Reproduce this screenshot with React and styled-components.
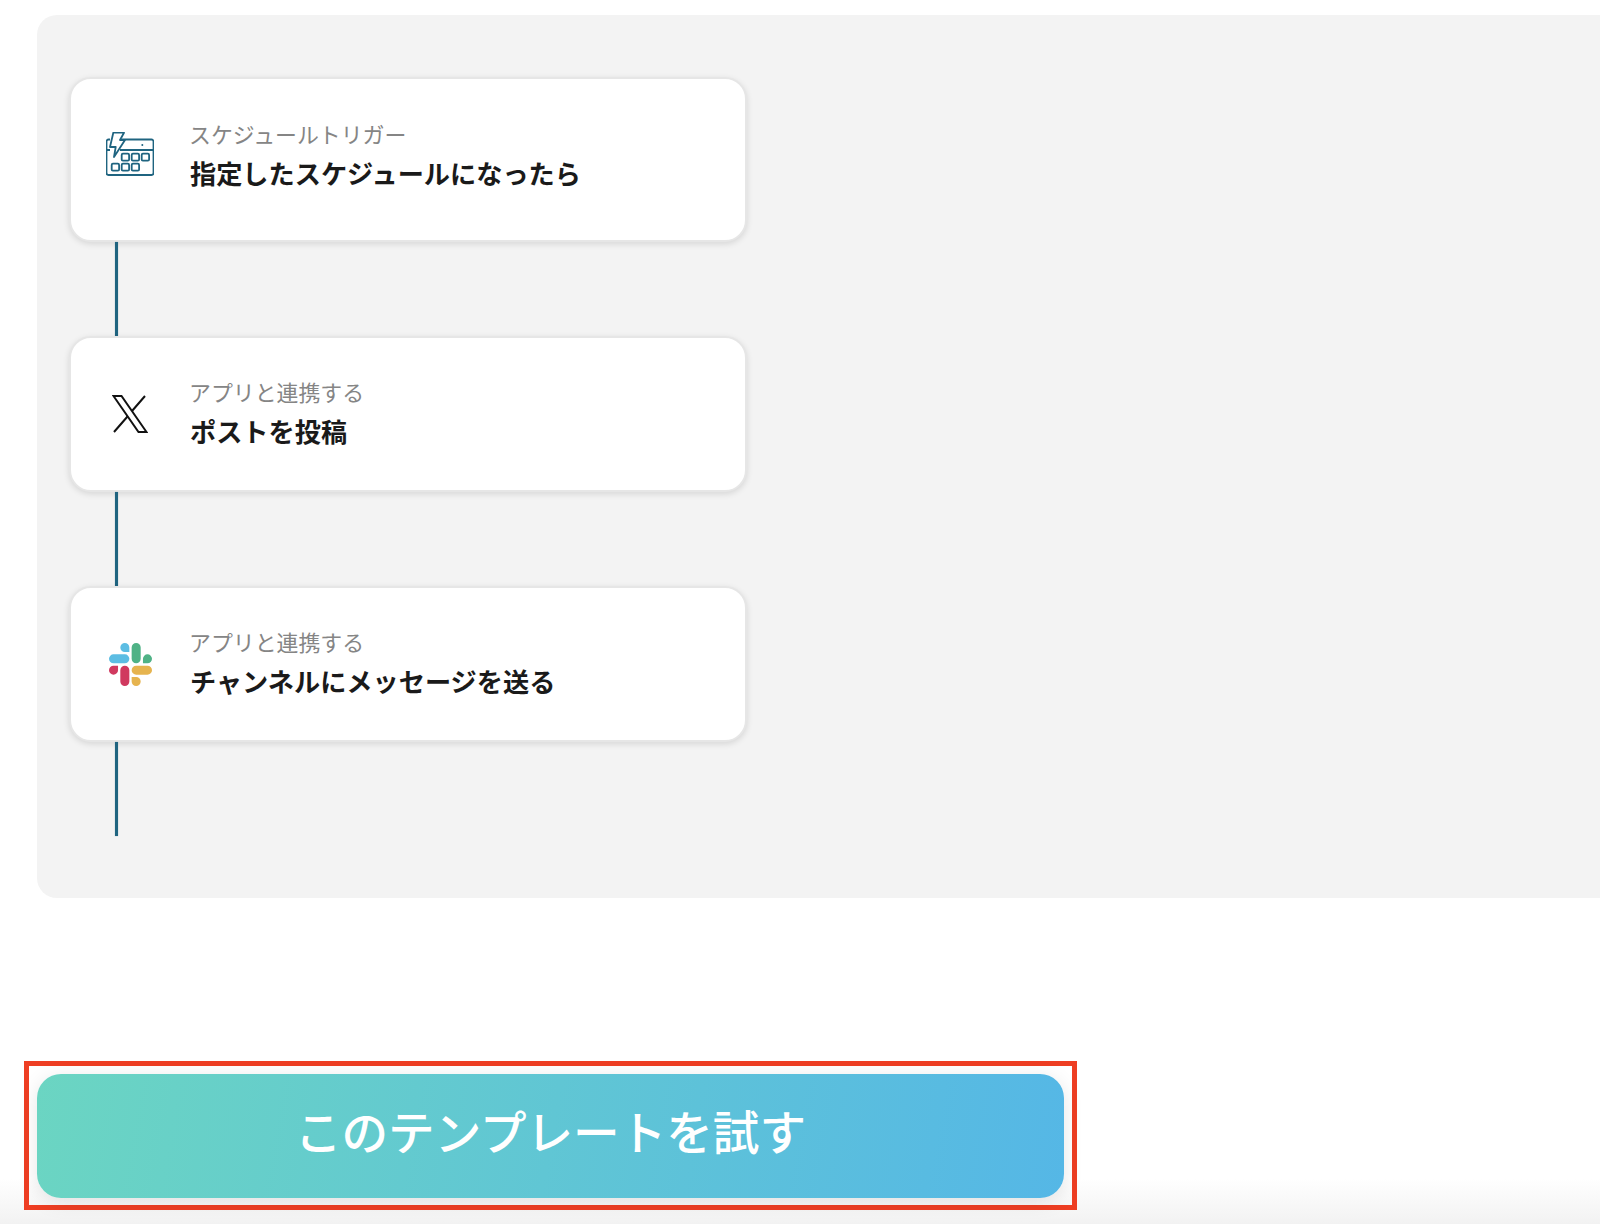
import React from 'react';
import styled, { createGlobalStyle } from 'styled-components';

const GlobalStyle = createGlobalStyle`
  html, body {
    margin: 0;
    padding: 0;
    background: #fff;
    font-family: "Noto Sans CJK JP", "Noto Sans", sans-serif;
  }
  #root {
    height: 1224px;
    overflow: hidden;
  }
`;

const ScheduleIcon = () => (
  <svg width="48" height="44" viewBox="0 0 48 44" fill="none" stroke="#1f6480" strokeWidth="1.8" strokeLinejoin="round">
    <path d="M4 7.5H2.5a2 2 0 0 0-2 2V41a2 2 0 0 0 2 2h43a2 2 0 0 0 2-2V9.500a2 2 0 0 0-2-2H16" />
    <path d="M14 18H47.500M.5 18H4" />
    <path fill="#fff" d="M7.300.7H18L14 8h5L8 25l1.700-10H4z" />
    <circle cx="36.300" cy="13" r="1" fill="#1f6480" stroke="none" />
    {[[15.7, 21.7], [25.7, 21.7], [35.7, 21.7], [5.7, 31.7], [15.7, 31.7], [25.7, 31.7]].map(([x, y]) => (
      <rect key={`${x}-${y}`} x={x} y={y} width="7.400" height="7" rx="1.200" />
    ))}
  </svg>
);

const XIcon = () => (
  <svg width="36" height="38" viewBox="0 0 36 38" fill="none" stroke="#111" strokeWidth="2">
    <path d="M1.500 1H9.500L34.500 37H26.500Z" />
    <path d="M33 1L20 16M15.500 21.500L2 37" />
  </svg>
);

const SlackIcon = () => (
  <svg width="43" height="43" viewBox="0 0 24 24">
    <path fill="#d0395f" d="M5.042 15.165a2.528 2.528 0 0 1-2.52 2.523A2.528 2.528 0 0 1 0 15.165a2.527 2.527 0 0 1 2.522-2.52h2.52v2.520zM6.313 15.165a2.527 2.527 0 0 1 2.521-2.520 2.527 2.527 0 0 1 2.521 2.520v6.313A2.528 2.528 0 0 1 8.834 24a2.528 2.528 0 0 1-2.521-2.522v-6.313z" />
    <path fill="#5cbde3" d="M8.834 5.042a2.528 2.528 0 0 1-2.521-2.520A2.528 2.528 0 0 1 8.834 0a2.528 2.528 0 0 1 2.521 2.522v2.520H8.834zM8.834 6.313a2.528 2.528 0 0 1 2.521 2.521 2.528 2.528 0 0 1-2.521 2.521H2.522A2.528 2.528 0 0 1 0 8.834a2.528 2.528 0 0 1 2.522-2.521h6.312z" />
    <path fill="#4fb286" d="M18.956 8.834a2.528 2.528 0 0 1 2.522-2.521A2.528 2.528 0 0 1 24 8.834a2.528 2.528 0 0 1-2.522 2.521h-2.522V8.834zM17.688 8.834a2.528 2.528 0 0 1-2.523 2.521 2.527 2.527 0 0 1-2.520-2.521V2.522A2.527 2.527 0 0 1 15.165 0a2.528 2.528 0 0 1 2.523 2.522v6.312z" />
    <path fill="#e6b44f" d="M15.165 18.956a2.528 2.528 0 0 1 2.523 2.522A2.528 2.528 0 0 1 15.165 24a2.527 2.527 0 0 1-2.520-2.522v-2.522h2.520zM15.165 17.688a2.527 2.527 0 0 1-2.520-2.523 2.526 2.526 0 0 1 2.520-2.520h6.313A2.527 2.527 0 0 1 24 15.165a2.528 2.528 0 0 1-2.522 2.523h-6.313z" />
  </svg>
);

const steps = [
  { id: 'trigger', icon: <ScheduleIcon />, label: 'スケジュールトリガー', title: '指定したスケジュールになったら', tall: true },
  { id: 'post', icon: <XIcon />, label: 'アプリと連携する', title: 'ポストを投稿' },
  { id: 'slack', icon: <SlackIcon />, label: 'アプリと連携する', title: 'チャンネルにメッセージを送る' },
];

const App = () => {
  return (
    <Page>
      <GlobalStyle />
      <FlowPanel>
        {steps.map((step) => (
          <React.Fragment key={step.id}>
            <StepCard $tall={step.tall}>
              <IconSlot $tall={step.tall}>{step.icon}</IconSlot>
              <StepText>
                <StepLabel>{step.label}</StepLabel>
                <StepTitle>{step.title}</StepTitle>
              </StepText>
            </StepCard>
            <Connector />
          </React.Fragment>
        ))}
      </FlowPanel>
      <Footer>
        <Highlight>
          <TryButton type="button">このテンプレートを試す</TryButton>
        </Highlight>
      </Footer>
    </Page>
  );
};

export default App;

const Page = styled.div`
  width: 1600px;
  height: 1224px;
  display: flex;
  flex-direction: column;
  padding-top: 15px;
  box-sizing: border-box;
`;

const FlowPanel = styled.section`
  width: 1600px;
  height: 883px;
  margin-left: 37px;
  padding: 62px 0 0 32px;
  box-sizing: border-box;
  flex-shrink: 0;
  background: #f3f3f3;
  border-radius: 20px 0 0 20px;
  display: flex;
  flex-direction: column;
  align-items: flex-start;
`;

const StepCard = styled.div`
  width: 678px;
  height: ${(p) => (p.$tall ? '165px' : '156px')};
  padding: ${(p) => (p.$tall ? '39px' : '38px')} 0 0 34px;
  box-sizing: border-box;
  display: flex;
  align-items: flex-start;
  gap: 34px;
  background: #fff;
  border: 2px solid #e6e6e6;
  border-radius: 22px;
  box-shadow: 0 2px 6px rgba(0, 0, 0, 0.12);
`;

const IconSlot = styled.div`
  width: 50px;
  height: ${(p) => (p.$tall ? '72px' : '76px')};
  display: flex;
  align-items: center;
  justify-content: center;
  flex-shrink: 0;
`;

const StepText = styled.div`
  display: flex;
  flex-direction: column;
  gap: 4px;
`;

const StepLabel = styled.span`
  font-size: 21.900px;
  line-height: 32px;
  color: #858585;
`;

const StepTitle = styled.span`
  font-size: 26.200px;
  line-height: 38px;
  font-weight: 700;
  color: #1a1a1a;
  padding-left: 1px;
`;

const Connector = styled.div`
  width: 3px;
  height: 94px;
  margin-left: 46px;
  flex-shrink: 0;
  background: #1f6480;
  box-shadow: 0 0 1px rgba(31, 100, 128, 0.7);
`;

const Footer = styled.footer`
  flex: 1;
  padding-top: 163px;
  box-sizing: border-box;
  background: linear-gradient(180deg, #fff 86%, #f2f2f2 100%);
`;

const Highlight = styled.div`
  width: 1053px;
  height: 149px;
  margin-left: 24px;
  padding: 8px 8px 7px;
  box-sizing: border-box;
  border: 5px solid #ee3e23;
`;

const TryButton = styled.button`
  width: 100%;
  height: 100%;
  padding: 0 0 13px;
  border: 0;
  border-radius: 24px;
  background: linear-gradient(100deg, #6bd5c2 0%, #55b7e6 100%);
  box-shadow: 0 4px 20px rgba(0, 0, 0, 0.1);
  color: #fff;
  font-family: inherit;
  font-size: 46.600px;
  font-weight: 500;
`;
